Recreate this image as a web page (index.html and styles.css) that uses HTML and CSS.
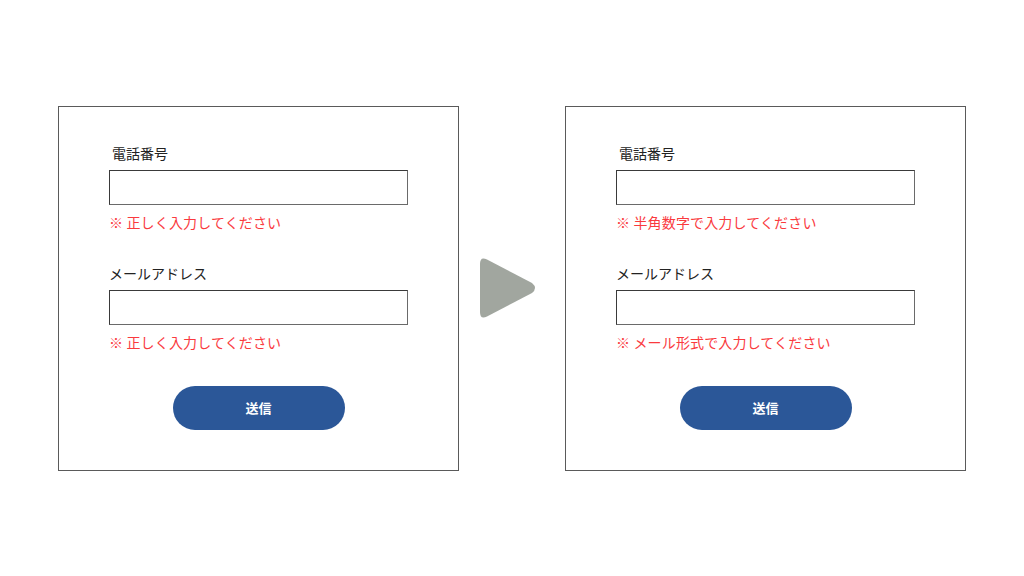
FILE: index.html
```html
<!DOCTYPE html>
<html lang="ja">
<head>
<meta charset="utf-8">
<title>フォーム</title>
<link rel="stylesheet" href="styles.css">
</head>
<body>
<main class="stage">
  <form class="card">
    <label class="label label-first">電話番号</label>
    <div class="input"></div>
    <p class="error">※ 正しく入力してください</p>
    <label class="label label-next">メールアドレス</label>
    <div class="input"></div>
    <p class="error">※ 正しく入力してください</p>
    <div class="actions"><span class="button">送信</span></div>
  </form>
  <div class="arrow">
    <svg width="64" height="64" viewBox="0 0 64 64">
      <path d="M0 8 Q0 0 7 3.5 L52 27 Q58 32 52 37 L7 60.5 Q0 64 0 56 Z" fill="#a1a69f"/>
    </svg>
  </div>
  <form class="card">
    <label class="label label-first">電話番号</label>
    <div class="input"></div>
    <p class="error">※ 半角数字で入力してください</p>
    <label class="label label-next">メールアドレス</label>
    <div class="input"></div>
    <p class="error">※ メール形式で入力してください</p>
    <div class="actions"><span class="button">送信</span></div>
  </form>
</main>
</body>
</html>
```
FILE: styles.css
```css
html, body {
  margin: 0;
  padding: 0;
  background: #ffffff;
}
body {
  font-family: "Noto Sans CJK JP", "Noto Sans", sans-serif;
  color: #222222;
}
.stage {
  height: 576px;
  display: flex;
  align-items: center;
  justify-content: center;
  gap: 21px;
}
.card {
  box-sizing: border-box;
  width: 401px;
  height: 365px;
  border: 1px solid #5a5a5a;
  padding: 36px 50px 40px;
  display: flex;
  flex-direction: column;
  margin: 0;
}
.label {
  display: block;
  font-size: 14px;
  line-height: 20px;
  color: #222222;
}
.label-first {
  padding-left: 3px;
}
.label-next {
  margin-top: 31px;
}
.input {
  box-sizing: border-box;
  margin-top: 7px;
  width: 299px;
  height: 35px;
  border: 1px solid #3a3a3a;
  border-bottom-color: #6a6a6a;
  border-right-color: #6a6a6a;
  background: #ffffff;
}
.error {
  margin: 7px 0 0;
  font-size: 14px;
  line-height: 20px;
  color: #fa3a3e;
  letter-spacing: 0.15px;
}
.actions {
  margin-top: 34px;
  display: flex;
  justify-content: center;
}
.button {
  width: 172px;
  height: 44px;
  border-radius: 22px;
  background: #2b5798;
  color: #ffffff;
  font-size: 13px;
  font-weight: 700;
  display: flex;
  align-items: center;
  justify-content: center;
}
.arrow {
  width: 64px;
  height: 64px;
  display: flex;
}
```
